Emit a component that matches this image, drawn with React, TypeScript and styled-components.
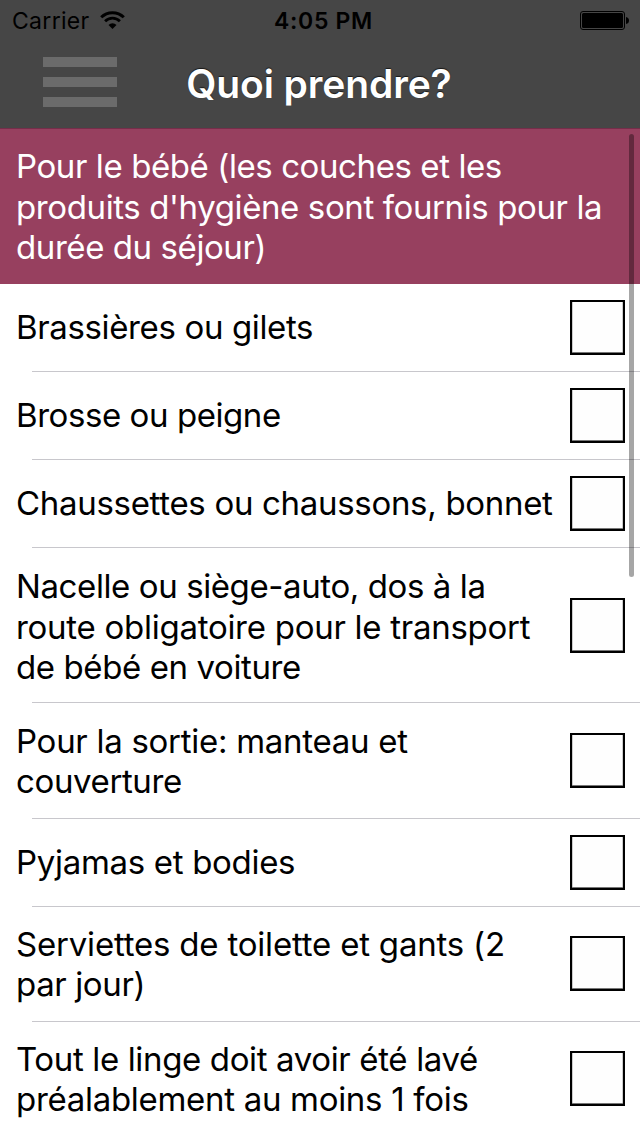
import React from "react";
import styled, { createGlobalStyle } from "styled-components";

const GlobalStyle = createGlobalStyle`
  *, *::before, *::after { box-sizing: border-box; }
  body { margin: 0; background: #fff; overflow: hidden; }
`;

const Screen = styled.main`
  position: relative;
  width: 640px;
  height: 1136px;
  overflow: hidden;
  background: #fff;
  color: #000;
  font-family: Inter, "Liberation Sans", sans-serif;
`;

const Header = styled.header`
  height: 129px;
  background: #464646;
  border-bottom: 1px solid #762d4a;
`;

const StatusBar = styled.div`
  display: grid;
  grid-template-columns: 1fr auto 1fr;
  align-items: center;
  height: 41px;
  padding: 0 11px 0 12px;
`;

const CarrierGroup = styled.div`
  display: flex;
  align-items: center;
  gap: 10px;
`;

const CarrierName = styled.span`
  padding-top: 2px;
  font-size: 23px;
  line-height: 39px;
  letter-spacing: 0.3px;
`;

const WifiIcon = styled.svg`
  margin-top: -1px;
`;

const Clock = styled.time`
  padding: 2px 0 0 6px;
  font-size: 23px;
  font-weight: 600;
  line-height: 39px;
  letter-spacing: 0.7px;
`;

const BatteryIcon = styled.svg`
  justify-self: end;
`;

const NavBar = styled.div`
  display: grid;
  grid-template-columns: 160px 1fr 160px;
  align-items: center;
  height: 87px;
`;

const MenuButton = styled.button`
  display: flex;
  flex-direction: column;
  gap: 10px;
  width: 74px;
  margin: -5px 0 0 43px;
  padding: 0;
  border: 0;
  background: none;
`;

const MenuBar = styled.span`
  height: 10px;
  background: #6b6b6b;
`;

const Title = styled.h1`
  margin: 0;
  padding: 0 2px 1px 0;
  color: #fff;
  font-size: 39px;
  font-weight: 600;
  line-height: 86px;
  letter-spacing: -0.12px;
  text-align: center;
  white-space: nowrap;
  text-shadow: 0 -1px 1px rgba(0, 0, 0, 0.65);
`;

const TextBlock = styled.div<{ $nudge: number }>`
  margin-top: ${(p) => p.$nudge}px;
  font-size: 33px;
  line-height: 40.5px;
`;

const Line = styled.span<{ $spacing: number }>`
  display: block;
  white-space: nowrap;
  letter-spacing: ${(p) => p.$spacing}px;
`;

const SectionHeader = styled.section`
  display: flex;
  align-items: center;
  height: 155px;
  padding: 0 16px;
  background: #97405f;
  color: #fff;
`;

const List = styled.ul`
  margin: 0;
  padding: 0;
  list-style: none;
`;

const Row = styled.li<{ $height: number }>`
  display: flex;
  align-items: center;
  justify-content: space-between;
  height: ${(p) => p.$height}px;
  padding: 0 15px 1px 16px;
  background: linear-gradient(#c8c7cc, #c8c7cc) 32px 100% / 100% 1px no-repeat;
`;

const CheckBox = styled.button`
  flex: none;
  width: 55px;
  height: 55px;
  padding: 0;
  border: 2px solid #000;
  background: #fefefe;
  box-shadow: inset 0 -1px 0 #777, inset 1px 0 0 #ccc, inset -1px 0 0 #ccc;
`;

const ScrollThumb = styled.div`
  position: absolute;
  top: 134px;
  right: 6px;
  width: 5px;
  height: 443px;
  border-radius: 3px;
  background: rgba(0, 0, 0, 0.35);
`;

type TextLine = [text: string, spacing: number];

const heading: TextLine[] = [
  ["Pour le bébé (les couches et les", -0.41],
  ["produits d'hygiène sont fournis pour la", -0.39],
  ["durée du séjour)", -0.42],
];

const items: { height: number; nudge?: number; lines: TextLine[] }[] = [
  { height: 88, lines: [["Brassières ou gilets", -0.36]] },
  { height: 88, lines: [["Brosse ou peigne", -0.43]] },
  { height: 88, lines: [["Chaussettes ou chaussons, bonnet", -0.31]] },
  {
    height: 155,
    nudge: 3.5,
    lines: [
      ["Nacelle ou siège-auto, dos à la", -0.4],
      ["route obligatoire pour le transport", -0.27],
      ["de bébé en voiture", -0.4],
    ],
  },
  { height: 116, nudge: 1.2, lines: [["Pour la sortie: manteau et", -0.28], ["couverture", -0.38]] },
  { height: 88, lines: [["Pyjamas et bodies", -0.31]] },
  {
    height: 114.8,
    nudge: 0.4,
    lines: [["Serviettes de toilette et gants (2", -0.2], ["par jour)", -0.38]],
  },
  {
    height: 114.8,
    nudge: 1,
    lines: [["Tout le linge doit avoir été lavé", -0.36], ["préalablement au moins 1 fois", -0.3]],
  },
];

const Lines = ({ lines, nudge = 0 }: { lines: TextLine[]; nudge?: number }) => (
  <TextBlock $nudge={nudge}>
    {lines.map(([text, spacing]) => (
      <Line key={text} $spacing={spacing}>
        {text}
      </Line>
    ))}
  </TextBlock>
);

export default function App() {
  return (
    <Screen>
      <GlobalStyle />
      <Header>
        <StatusBar>
          <CarrierGroup>
            <CarrierName>Carrier</CarrierName>
            <WifiIcon width="25" height="18" viewBox="0 0 25 18" fill="none" stroke="#000">
              <path d="M1.2 6.3a16 16 0 0 1 22.6 0" strokeWidth="3" />
              <path d="M5.1 10.3a10.4 10.4 0 0 1 14.8 0" strokeWidth="2.8" />
              <path d="M12.5 18l-4-4a5.7 5.7 0 0 1 8 0z" fill="#000" stroke="none" />
            </WifiIcon>
          </CarrierGroup>
          <Clock>4:05 PM</Clock>
          <BatteryIcon width="49" height="19" viewBox="0 0 49 19">
            <rect x="0.5" y="0.5" width="44" height="18" rx="2.5" fill="none" stroke="#000" />
            <rect x="2" y="2" width="41" height="15" rx="1.5" />
            <path d="M46 6q3 .5 3 3.500t-3 3.500z" />
          </BatteryIcon>
        </StatusBar>
        <NavBar>
          <MenuButton aria-label="Menu">
            <MenuBar />
            <MenuBar />
            <MenuBar />
          </MenuButton>
          <Title>Quoi prendre?</Title>
        </NavBar>
      </Header>
      <SectionHeader>
        <Lines lines={heading} nudge={0.6} />
      </SectionHeader>
      <List>
        {items.map((item) => (
          <Row key={item.lines[0][0]} $height={item.height}>
            <Lines lines={item.lines} nudge={item.nudge} />
            <CheckBox role="checkbox" aria-checked={false} aria-label={item.lines[0][0]} />
          </Row>
        ))}
      </List>
      <ScrollThumb />
    </Screen>
  );
}
